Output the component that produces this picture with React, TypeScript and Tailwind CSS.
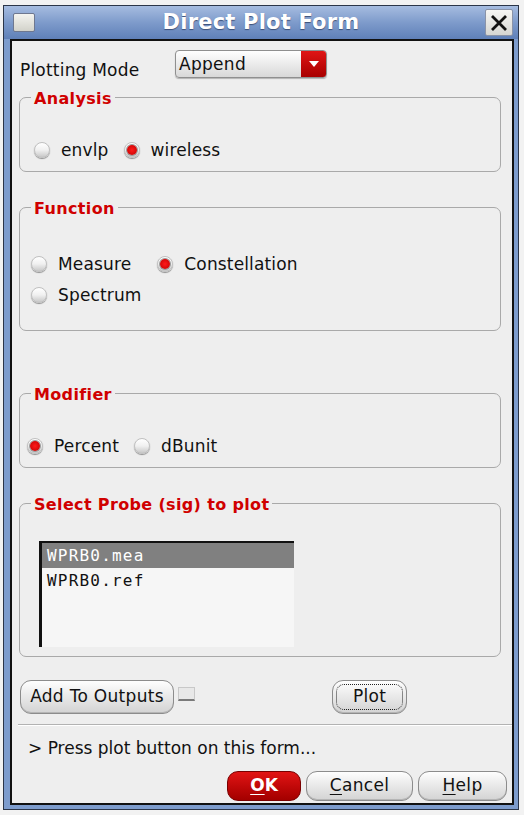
import React from "react";

const sans = { fontFamily: '"DejaVu Sans", Verdana, sans-serif' };

const Radio = ({ on }: { on?: boolean }) => (
  <span className="relative w-[16px] h-[16px] rounded-full border border-[#c0c0c0] bg-linear-to-b from-[#ffffff] via-[#f0f0f0] to-[#c8c8c8] shadow-[0_1px_1px_rgba(0,0,0,0.4)] flex items-center justify-center shrink-0">
    {on && <span className="w-[10px] h-[10px] rounded-full bg-radial from-[#ff1a1a] to-[#c00000] shadow-[0_0_0_1px_#999999]" />}
  </span>
);

const Option = ({ on, label, gap }: { on?: boolean; label: string; gap?: string }) => (
  <div className={"flex items-center gap-[11px] " + (gap ?? "")}>
    <Radio on={on} />
    <span className="text-[17px] leading-[20px] tracking-[0.15px] text-[#111]">{label}</span>
  </div>
);

const Group = ({ title, className, children }: { title: string; className: string; children?: React.ReactNode }) => (
  <div className={"relative ml-[7px] w-[482px] border border-[#a9a9a9] rounded-[7px] shrink-0 " + className}>
    <span className="absolute top-[-8px] left-[11px] px-[3px] bg-[#eeeeee] text-[16px] leading-[18px] font-bold tracking-[0.35px] text-[#d00000]">
      {title}
    </span>
    {children}
  </div>
);

const Btn = ({ children, className }: { children: React.ReactNode; className: string }) => (
  <button className={"flex items-center justify-center rounded-[11px] border border-[#8c8c8c] bg-linear-to-b from-[#fefefe] to-[#d3d3d3] shadow-[inset_0_-1px_0_#b5b5b5] text-[17px] tracking-[0.3px] text-[#111] " + className}>
    {children}
  </button>
);

export default function App() {
  return (
    <div className="w-[524px] h-[815px] bg-[#f2f2f2] pt-[5px] pl-[3px]" style={sans}>
      <div className="w-[516px] h-[805px] border border-[#2b3548] bg-[#7d9ccd] flex flex-col">
        {/* title bar */}
        <div className="h-[33px] relative flex items-center justify-center bg-linear-to-b from-[#a6bce0] via-[#7e9bcb] to-[#5f80b8]">
          <div className="absolute left-[9px] top-[7px] w-[22px] h-[19px] rounded-[2px] border border-[#6e7890] bg-linear-to-b from-[#f4f4f0] to-[#d2d2ca]" />
          <span className="text-white font-bold text-[21px] tracking-[0.2px] [text-shadow:0_1px_1px_#3b4f78]">Direct Plot Form</span>
          <div className="absolute right-[5px] top-[3px] w-[28px] h-[27px] rounded-[2px] border border-[#8a93a8] bg-linear-to-b from-[#f6f6f4] to-[#d6d6d2] flex items-center justify-center">
            <svg width="20" height="20" viewBox="0 0 20 20">
              <path d="M3 3 L17 17 M17 3 L3 17" stroke="#111" strokeWidth="2.8" />
            </svg>
          </div>
        </div>

        {/* body */}
        <div className="ml-[6px] w-[504px] h-[766px] border-2 border-[#111] bg-[#eeeeee] flex flex-col">
          <div className="mt-[9px] flex items-center h-[28px]">
            <span className="pl-[8px] w-[163px] text-[17px] tracking-[0.2px] text-[#111] pt-[14px]">Plotting Mode</span>
            <div className="w-[152px] h-[28px] rounded-[4px] border border-[#8f8f8f] bg-linear-to-b from-[#ffffff] to-[#d8d8d8] flex items-center overflow-hidden shadow-[0_1px_1px_rgba(0,0,0,0.25)]">
              <span className="flex-1 pl-[3px] pt-[2px] text-[17px] tracking-[0.3px] text-[#111]">Append</span>
              <div className="w-[25px] h-full bg-linear-to-b from-[#e01515] to-[#a80000] flex items-center justify-center">
                <svg width="10" height="6" viewBox="0 0 10 6">
                  <path d="M0 0 H10 L5 6 Z" fill="#fff" />
                </svg>
              </div>
            </div>
          </div>

          <Group title="Analysis" className="mt-[19px] h-[75px]">
            <div className="flex items-center pl-[14px] pt-[42px]">
              <Option label="envlp" />
              <Option on label="wireless" gap="ml-[15px]" />
            </div>
          </Group>

          <Group title="Function" className="mt-[35px] h-[124px]">
            <div className="flex flex-col pl-[11px] pt-[46px] gap-[11px]">
              <div className="flex items-center">
                <Option label="Measure" />
                <Option on label="Constellation" gap="ml-[26px]" />
              </div>
              <Option label="Spectrum" />
            </div>
          </Group>

          <Group title="Modifier" className="mt-[62px] h-[75px]">
            <div className="flex items-center pl-[7px] pt-[42px]">
              <Option on label="Percent" />
              <Option label="dBunit" gap="ml-[15px]" />
            </div>
          </Group>

          <Group title="Select Probe (sig) to plot" className="mt-[35px] h-[154px]">
            <div
              className="ml-[19px] mt-[37px] w-[255px] h-[106px] bg-[#f6f6f6] border-l-[3px] border-t-[2px] border-[#111] text-[16px] tracking-[1.2px]"
              style={{ fontFamily: '"DejaVu Sans Mono", "Liberation Mono", monospace' }}
            >
              <div className="h-[25px] bg-[#808080] text-white flex items-center pl-[5px]">WPRB0.mea</div>
              <div className="h-[25px] text-[#111] flex items-center pl-[5px]">WPRB0.ref</div>
            </div>
          </Group>

          <div className="mt-[23px] flex items-center h-[34px]">
            <Btn className="ml-[8px] w-[154px] h-[34px]">Add To Outputs</Btn>
            <div className="ml-[4px] mb-[6px] w-[17px] h-[14px] bg-[#e8e8e8] border border-[#c8c8c8] border-b-[2px] border-b-[#7a7a7a]" />
            <Btn className="ml-[137px] w-[75px] h-[34px] relative">
              <span className="absolute inset-[3px] rounded-[8px] border border-dotted border-[#222]" />
              Plot
            </Btn>
          </div>

          <div className="mt-[10px] ml-[6px] h-[2px] border-t border-[#b2b2b2] bg-white" />

          <div className="mt-[12px] pl-[16px] text-[17px] leading-[20px] text-[#111]">&gt; Press plot button on this form...</div>

          <div className="mt-[13px] flex justify-end gap-[5px] pr-[5px]">
            <button className="w-[74px] h-[30px] rounded-[11px] border border-[#7a0000] bg-linear-to-b from-[#e21414] to-[#a30000] text-white font-bold text-[17px] flex items-center justify-center">
              <span className="underline underline-offset-[3px]">O</span>K
            </button>
            <Btn className="w-[107px] h-[30px]">
              <span className="underline underline-offset-[3px]">C</span>ancel
            </Btn>
            <Btn className="w-[89px] h-[30px]">
              <span className="underline underline-offset-[3px]">H</span>elp
            </Btn>
          </div>
        </div>
      </div>
    </div>
  );
}
